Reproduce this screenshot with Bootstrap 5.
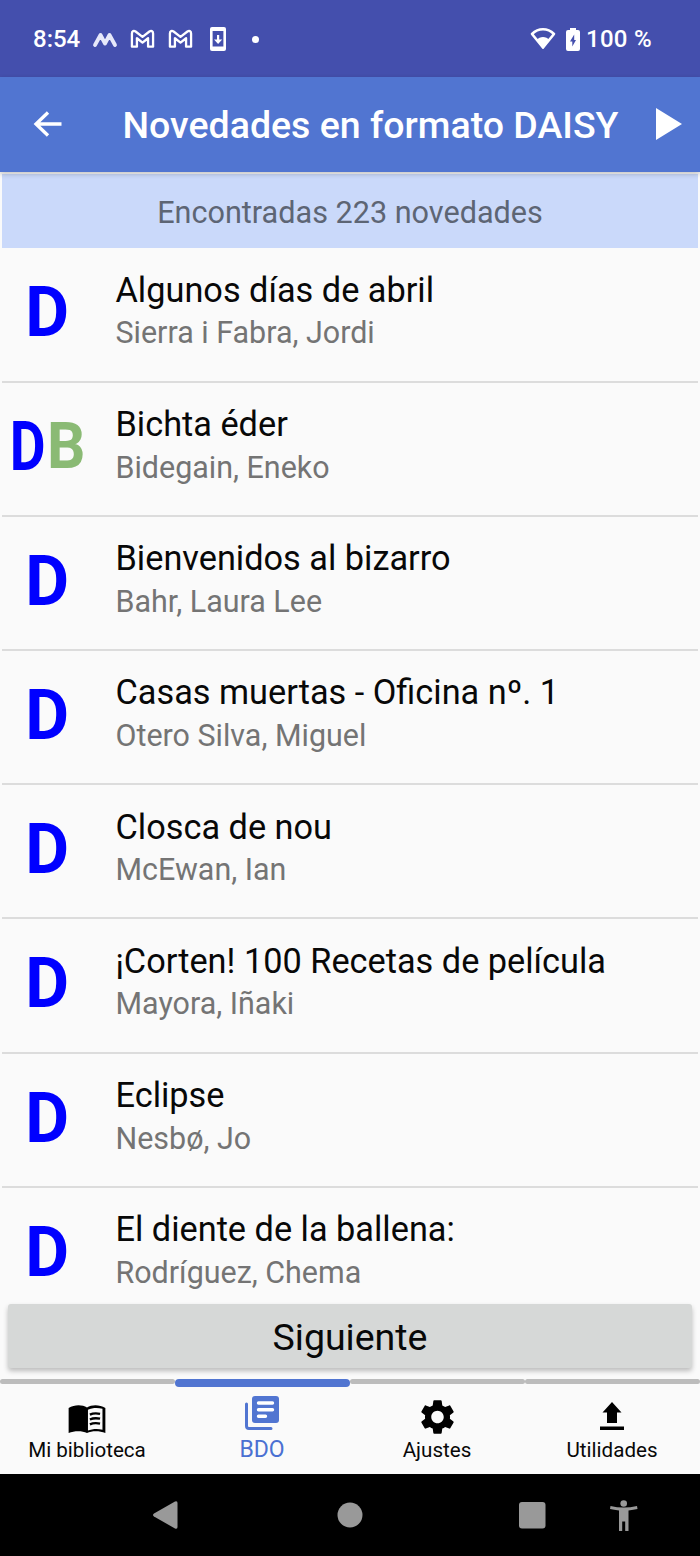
<!DOCTYPE html>
<html lang="es">
<head>
<meta charset="utf-8">
<meta name="viewport" content="width=device-width, initial-scale=1">
<title>Novedades en formato DAISY</title>
<link href="https://cdn.jsdelivr.net/npm/bootstrap@5.3.0/dist/css/bootstrap.min.css" rel="stylesheet">
<style>
  body { font-family: Roboto, sans-serif; font-weight: 400; background: #fafafa; color: #080808; width: 700px; height: 1556px; overflow: hidden; }
  svg { display: block; flex: none; overflow: visible; }
  .status-bar { height: 76.5px; background: #444fad; padding: 2px 48px 0 33px; color: #fff; }
  .status-text { font-size: 24px; font-weight: 500; line-height: 1; }
  .app-bar { height: 95px; background: #5175d1; color: #fff; padding: 0 18px 0 34px; box-shadow: 0 2px 5px rgba(0,0,0,.22); z-index: 2; position: relative; }
  .app-title { font-size: 37.5px; font-weight: 500; line-height: 1; margin: 3px 0 0 23px; white-space: nowrap; }
  .found { height: 74.5px; margin: 2px 2px 0; background: #cad9fa; color: #5d6574; font-size: 30.6px; padding-top: 4px; }
  .books { height: 1055.5px; padding-top: .4px; }
  .book { height: 134.2px; margin: 0 2px; border-bottom: 2px solid #dcdcdc; flex: none; }
  .book-mark { width: 113.5px; height: 132px; font-family: Roboto, sans-serif; font-weight: 700; }
  .book-title { font-size: 34.3px; line-height: 40px; padding-top: 21.5px; margin: 0; font-weight: 400; white-space: nowrap; }
  .book-author { font-size: 30.45px; line-height: 36px; margin-top: 5.6px; color: #747474; white-space: nowrap; }
  .next-btn { height: 64px; margin: 0 8px; padding: 4px 0 0; background: #d6d8d7; border: 0; border-radius: 3px; font-size: 37.5px; line-height: 1; color: #080808; box-shadow: 0 3px 5px rgba(0,0,0,.25); }
  .tabs { margin-top: 11px; height: 95.5px; }
  .tab-line { height: 5px; background: #bcbcbc; border-radius: 3px; }
  .tab-item.current .tab-line { height: 8px; border-radius: 4px; background: #5175d1; }
  .tab-item.current { color: #4a70d2; }
  .tab-icon { height: 50px; padding-right: 1px; }
  .tab-item.current .tab-icon { height: 43px; }
  .tab-label { font-size: 20.6px; line-height: 24px; margin-top: 4px; padding-right: 1px; }
  .tab-item.current .tab-label { font-size: 23px; margin-top: 8px; }
  .system-nav { height: 82px; background: #000; }
</style>
</head>
<body class="d-flex flex-column">
<header class="status-bar d-flex align-items-center flex-shrink-0">
  <span class="status-text">8:54</span>
  <svg style="margin-left:13px" width="24" height="16" viewBox="0 0 24 16"><path d="M2 14 7.500 4 12 12.500 16.500 4 22 14" fill="none" stroke="#e6e8fa" stroke-width="3.800" stroke-linecap="round" stroke-linejoin="round"/></svg>
  <svg style="margin-left:13px" width="25" height="20" viewBox="0 0 26 20"><path id="gmail" d="M2 4.200C2 1.600 4 1 5.800 2.200L13 7.800l7.200-5.600C22 1 24 1.600 24 4.200V18h-5.200V9.200L13 13.800 7.200 9.200V18H2z" fill="none" stroke="#fff" stroke-width="2.400" stroke-linejoin="round"/></svg>
  <svg style="margin-left:13px" width="25" height="20" viewBox="0 0 26 20"><use href="#gmail"/></svg>
  <svg style="margin-left:17px" width="16" height="24" viewBox="0 0 16 24"><rect width="16" height="24" rx="2" fill="#fff"/><path d="M2.600 4h10.800v15.500H2.600z" fill="#444fad"/><path d="M7 8h2.200v4.400h3L8.100 17 4 12.400h3z" fill="#fff"/></svg>
  <svg style="margin-left:26px" width="7" height="7"><circle cx="3.500" cy="3.500" r="3.500" fill="#fff"/></svg>
  <svg class="ms-auto" width="26" height="22" viewBox="0 0 26 22"><path d="M2 6C8.500-.3 17.500-.3 24 6L13 19.500z" fill="none" stroke="#fff" stroke-width="2.600" stroke-linejoin="round"/><path d="M6.500 12c3.500-4 9.500-4 13 0L13 21z" fill="#fff"/></svg>
  <svg style="margin-left:10px" width="14" height="23" viewBox="0 0 14 23"><path d="M4 0h6v2h2a2 2 0 0 1 2 2v17a2 2 0 0 1-2 2H2a2 2 0 0 1-2-2V4a2 2 0 0 1 2-2h2z" fill="#fff"/><path d="M8.200 6.500 4 13.500h2.300v5L10 12H8.200z" fill="#444fad"/></svg>
  <span class="status-text" style="margin-left:6px;letter-spacing:.3px">100 %</span>
</header>

<nav class="app-bar d-flex align-items-center justify-content-between flex-shrink-0">
  <svg width="28" height="26" viewBox="0 0 28 26"><path d="M27.500 13H2M14 1.500 2 13l12 11.500" fill="none" stroke="#fff" stroke-width="3.300"/></svg>
  <h1 class="app-title">Novedades en formato DAISY</h1>
  <svg width="26" height="32" viewBox="0 0 26 32"><path d="M0 0 26 16 0 32z" fill="#fff"/></svg>
</nav>

<div class="found d-flex align-items-center justify-content-center flex-shrink-0">Encontradas 223 novedades</div>

<main class="books d-flex flex-column overflow-hidden flex-shrink-0">
  <article class="book d-flex"><svg class="book-mark"><text transform="translate(23.300 88) scale(.95 1)" font-size="71" fill="#00f">D</text></svg><div><h2 class="book-title">Algunos días de abril</h2><div class="book-author">Sierra i Fabra, Jordi</div></div></article>
  <article class="book d-flex">
    <svg class="book-mark"><text transform="translate(7.800 86.500) scale(.81 1)" font-size="68" fill="#00f">D</text><text transform="translate(45 85) scale(.94 1)" font-size="64" fill="#8aba74">B</text></svg>
    <div><h2 class="book-title">Bichta éder</h2><div class="book-author">Bidegain, Eneko</div></div></article>
  <article class="book d-flex"><svg class="book-mark"><text transform="translate(23.300 88) scale(.95 1)" font-size="71" fill="#00f">D</text></svg><div><h2 class="book-title">Bienvenidos al bizarro</h2><div class="book-author">Bahr, Laura Lee</div></div></article>
  <article class="book d-flex"><svg class="book-mark"><text transform="translate(23.300 88) scale(.95 1)" font-size="71" fill="#00f">D</text></svg><div><h2 class="book-title">Casas muertas - Oficina nº. 1</h2><div class="book-author">Otero Silva, Miguel</div></div></article>
  <article class="book d-flex"><svg class="book-mark"><text transform="translate(23.300 88) scale(.95 1)" font-size="71" fill="#00f">D</text></svg><div><h2 class="book-title">Closca de nou</h2><div class="book-author">McEwan, Ian</div></div></article>
  <article class="book d-flex"><svg class="book-mark"><text transform="translate(23.300 88) scale(.95 1)" font-size="71" fill="#00f">D</text></svg><div><h2 class="book-title">¡Corten! 100 Recetas de película</h2><div class="book-author">Mayora, Iñaki</div></div></article>
  <article class="book d-flex"><svg class="book-mark"><text transform="translate(23.300 88) scale(.95 1)" font-size="71" fill="#00f">D</text></svg><div><h2 class="book-title">Eclipse</h2><div class="book-author">Nesbø, Jo</div></div></article>
  <article class="book d-flex"><svg class="book-mark"><text transform="translate(23.300 88) scale(.95 1)" font-size="71" fill="#00f">D</text></svg><div><h2 class="book-title">El diente de la ballena:</h2><div class="book-author">Rodríguez, Chema</div></div></article>
</main>

<button type="button" class="next-btn flex-shrink-0">Siguiente</button>

<div class="tabs d-flex text-center flex-shrink-0">
  <div class="tab-item col-3"><div class="tab-line"></div>
    <div class="tab-icon d-flex justify-content-center align-items-end"><svg width="38" height="29" viewBox="0 0 38 30"><path d="M0 3C6-.7 14-.7 19 2.500 24-.7 32-.7 38 3v26c-6-2.500-14-2.500-19 0-5-2.500-13-2.500-19 0z"/><path d="M20 5c4.500-2.300 10-2.600 15-1v21.500c-5-1.200-11-.8-15 1z" fill="#fafafa"/><path d="M22 10c3-1.400 7-1.600 10.500-.8M22 15c3-1.400 7-1.600 10.500-.8M22 20c3-1.400 7-1.600 10.500-.8" fill="none" stroke="#000" stroke-width="2.400"/></svg></div>
    <div class="tab-label">Mi biblioteca</div></div>
  <div class="tab-item current col-3"><div class="tab-line"></div>
    <div class="tab-icon d-flex justify-content-center align-items-end"><svg width="34" height="34" viewBox="0 0 34 34"><rect x="7" width="27" height="27" rx="3" fill="#5175d1"/><path d="M1.500 8v22a2.500 2.500 0 0 0 2.500 2.500h22" fill="none" stroke="#5175d1" stroke-width="3" stroke-linecap="round"/><path d="M13.500 7h14M13.500 13.700h14M13.500 20.300h7" stroke="#fff" stroke-width="3.400" stroke-linecap="round"/></svg></div>
    <div class="tab-label">BDO</div></div>
  <div class="tab-item col-3"><div class="tab-line"></div>
    <div class="tab-icon d-flex justify-content-center align-items-end"><svg width="33" height="34" viewBox="2.500 2.400 19 19.200"><path d="M19.140 12.940c.04-.3.060-.61.060-.94 0-.32-.02-.64-.07-.94l2.030-1.580c.18-.14.230-.41.120-.61l-1.920-3.320c-.12-.22-.37-.29-.59-.22l-2.390.96c-.5-.38-1.030-.7-1.620-.94l-.36-2.540c-.04-.24-.24-.41-.48-.41h-3.840c-.24 0-.43.17-.47.41l-.36 2.540c-.59.24-1.130.57-1.620.94l-2.390-.96c-.22-.08-.47 0-.59.22L2.740 8.870c-.12.210-.08.470.12.610l2.030 1.580c-.05.3-.09.630-.09.940s.02.640.07.940l-2.030 1.580c-.18.140-.23.410-.12.610l1.920 3.320c.12.220.37.290.59.220l2.390-.96c.5.380 1.030.700 1.620.940l.36 2.540c.05.240.240.410.480.410h3.840c.24 0 .44-.17.470-.41l.36-2.540c.59-.24 1.130-.56 1.620-.94l2.390.96c.22.080.470 0 .59-.22l1.920-3.320c.12-.22.070-.47-.12-.61l-2.010-1.580zM12 15.600c-1.980 0-3.600-1.620-3.600-3.600s1.620-3.600 3.600-3.600 3.600 1.620 3.600 3.600-1.620 3.600-3.600 3.600z"/></svg></div>
    <div class="tab-label">Ajustes</div></div>
  <div class="tab-item col-3"><div class="tab-line"></div>
    <div class="tab-icon d-flex justify-content-center align-items-end"><svg width="24" height="32" viewBox="0 0 24 32"><path d="M12 0 21.500 10.500H17V21H7V10.500H2.500zM0 24.500h24v3.500H0z"/></svg></div>
    <div class="tab-label">Utilidades</div></div>
</div>

<footer class="system-nav flex-shrink-0">
  <svg width="700" height="81" viewBox="0 1474 700 81" fill="#999"><path d="M154 1513.500 175 1501.500q2.500-1 2.500 1.500v24q0 2.500-2.500 1.500L154 1516.500q-2-1.500 0-3z"/><circle cx="350" cy="1515" r="12.500"/><rect x="519" y="1502" width="26.500" height="26.500" rx="3"/><circle cx="623.700" cy="1503.500" r="3.300"/><path d="M610.500 1506q13 3 26.500 0l.5 3q-4 1-9 1.400V1531h-3.300v-9.500h-3V1531H619v-20.600q-5-.4-9-1.400z"/></svg>
</footer>
<script src="https://cdn.jsdelivr.net/npm/bootstrap@5.3.0/dist/js/bootstrap.bundle.min.js"></script>
</body>
</html>
